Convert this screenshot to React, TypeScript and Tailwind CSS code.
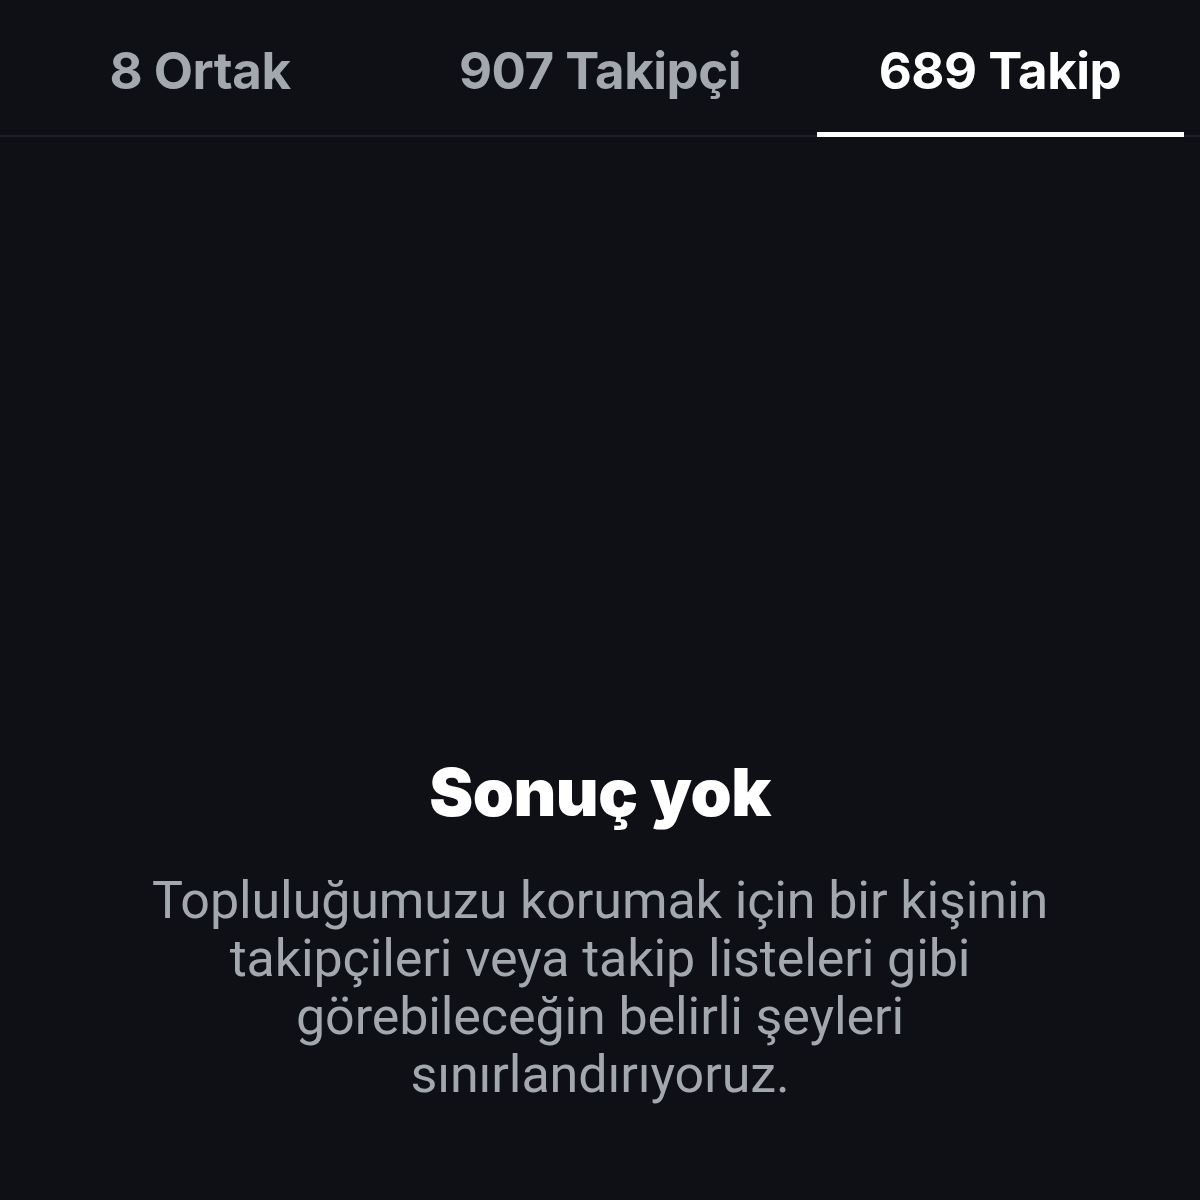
export default function App() {
  const tabs = [
    { label: "8 Ortak", active: false },
    { label: "907 Takipçi", active: false },
    { label: "689 Takip", active: true },
  ];
  return (
    <div className="w-[1200px] h-[1200px] bg-[#0e1016] flex flex-col" style={{ fontFamily: "Inter, 'Noto Sans', sans-serif" }}>
      <div className="flex h-[137px] border-b-2 border-[#1c1f26]">
        {tabs.map((t) => (
          <div key={t.label} className="flex-1 flex flex-col items-center relative">
            <div className={`mt-[42px] text-[51px] font-bold leading-[58px] tracking-[-0.5px] ${t.active ? "text-white" : "text-[#a3a7ae]"}`}>
              {t.label}
            </div>
            {t.active && <div className="absolute bottom-[-2px] left-[17px] right-[16px] h-[5px] bg-white" />}
          </div>
        ))}
      </div>
      <div className="flex flex-col items-center mt-[617px]">
        <div className="text-[66px] font-black text-white leading-[76px] tracking-[-0.5px]">Sonuç yok</div>
        <div className="mt-[42px] text-center text-[#a3a7ae] text-[52px] leading-[58px] tracking-[-0.1px] w-[1000px]" style={{ fontFamily: "Roboto, sans-serif" }}>
          Topluluğumuzu korumak için bir kişinin<br />
          takipçileri veya takip listeleri gibi<br />
          görebileceğin belirli şeyleri<br />
          sınırlandırıyoruz.
        </div>
      </div>
    </div>
  );
}
